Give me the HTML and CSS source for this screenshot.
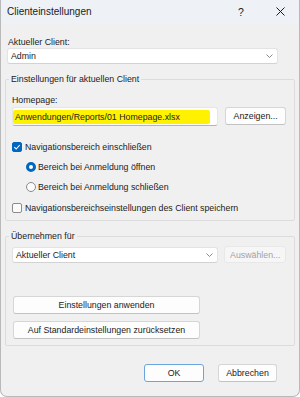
FILE: index.html
```html
<!DOCTYPE html>
<html lang="de">
<head>
  <meta charset="UTF-8" />
  <meta name="viewport" content="width=device-width, initial-scale=1.0"/>
  <title>Clienteinstellungen</title>
  <link rel="stylesheet" href="styles.css">
</head>
<body>

  <div class="dialog">
    <div class="titlebar">
      <span class="title">Clienteinstellungen</span>
      <span class="help">?</span>
      <span class="close">
        <svg width="9" height="9" viewBox="0 0 9 9"><path d="M0.5 0.5 L8.5 8.5 M8.5 0.5 L0.5 8.5" stroke="#1b1b1b" stroke-width="1"/></svg>
      </span>
    </div>

    <div class="content">
      <div class="label client-label">Aktueller Client:</div>
      <div class="combo client-combo">
        <span>Admin</span>
        <svg class="chevron" width="7" height="4" viewBox="0 0 7 4"><path d="M0.5 0.5 L3.5 3.5 L6.5 0.5" fill="none" stroke="#8a8a8a" stroke-width="1"/></svg>
      </div>

      <fieldset class="group group-current">
        <legend>Einstellungen für aktuellen Client</legend>
        <div class="label homepage-label">Homepage:</div>
        <div class="path-row">
          <div class="textbox"><span class="marker">Anwendungen/Reports/01 Homepage.xlsx</span></div>
          <button class="btn btn-show">Anzeigen...</button>
        </div>

        <div class="option first-check">
          <span class="box checked">
            <svg width="8" height="8" viewBox="0 0 8 8"><path d="M1.3 4.2 L3.2 6 L6.8 2" fill="none" stroke="#fff" stroke-width="1.1"/></svg>
          </span>
          Navigationsbereich einschließen
        </div>
        <div class="option radio-row">
          <span class="radio selected"></span>
          Bereich bei Anmeldung öffnen
        </div>
        <div class="option radio-row">
          <span class="radio"></span>
          Bereich bei Anmeldung schließen
        </div>
        <div class="option last-check">
          <span class="box"></span>
          Navigationsbereichseinstellungen des Client speichern
        </div>
      </fieldset>

      <fieldset class="group group-apply">
        <legend>Übernehmen für</legend>
        <div class="apply-row">
          <div class="combo apply-combo">
            <span>Aktueller Client</span>
            <svg class="chevron" width="7" height="4" viewBox="0 0 7 4"><path d="M0.5 0.5 L3.5 3.5 L6.5 0.5" fill="none" stroke="#8a8a8a" stroke-width="1"/></svg>
          </div>
          <button class="btn btn-select" disabled>Auswählen...</button>
        </div>
        <button class="btn wide-btn first-wide">Einstellungen anwenden</button>
        <button class="btn wide-btn">Auf Standardeinstellungen zurücksetzen</button>
      </fieldset>

      <div class="footer">
        <button class="btn btn-ok">OK</button>
        <button class="btn btn-cancel">Abbrechen</button>
      </div>
    </div>
  </div>

</body>
</html>
```

FILE: styles.css
```css
body {
  margin: 0;
  padding: 0;
  background: #ffffff;
}

.dialog {
  width: 300px;
  height: 397px;
  box-sizing: border-box;
  border: 1px solid #b9b9b9;
  border-top: none;
  border-radius: 0 0 7px 7px;
  background: #f0f0f0;
  overflow: hidden;
  font-family: "Liberation Sans", Arial, sans-serif;
  font-size: 8.8px;
  color: #1b1b1b;
}

.titlebar {
  height: 23px;
  display: flex;
  align-items: center;
  background: #eef2f7;
}

.title {
  flex: 1;
  padding-left: 6px;
  font-size: 10px;
}

.help {
  width: 40px;
  text-align: center;
  font-size: 10.5px;
}

.close {
  width: 38px;
  display: flex;
  justify-content: center;
}

.content {
  padding: 13px 4px 0 4px;
}

.label {
  line-height: 12px;
}

.client-label {
  margin-left: 3px;
}

.combo {
  height: 16px;
  box-sizing: border-box;
  background: #ffffff;
  border: 1px solid #e3e3e3;
  border-bottom-color: #d2d2d2;
  border-radius: 3px;
  display: flex;
  align-items: center;
  justify-content: space-between;
  padding: 0 4px 0 3px;
}

.client-combo {
  width: 271px;
  margin-left: 2px;
}

.group {
  margin: 9px 0 0 0;
  padding: 0 8px 6px 6px;
  border: 1px solid #dcdcdc;
  border-radius: 2px;
  min-width: 0;
}

.group legend {
  padding: 0 2px;
  margin-left: -3px;
  line-height: 12px;
}

.homepage-label {
  margin-top: 9px;
}

.path-row {
  display: flex;
  align-items: flex-start;
  gap: 7px;
  margin-top: 1px;
}

.textbox {
  width: 207px;
  height: 19px;
  box-sizing: border-box;
  background: #ffffff;
  border: 1px solid #e6e6e6;
  border-bottom-color: #b5b5b5;
  border-radius: 3px;
  display: flex;
  align-items: center;
}

.marker {
  width: 197px;
  height: 14px;
  line-height: 14px;
  box-sizing: border-box;
  padding-left: 2px;
  background: #fff200;
  border-radius: 2px;
}

.btn {
  height: 18px;
  box-sizing: border-box;
  padding: 0;
  font: inherit;
  color: inherit;
  background: #fdfdfd;
  border: 1px solid #d6d6d6;
  border-bottom-color: #c2c2c2;
  border-radius: 3px;
}

.btn-show {
  width: 61px;
}

.option {
  display: flex;
  align-items: center;
  line-height: 12px;
  margin-top: 8px;
}

.first-check {
  margin-top: 15px;
}

.last-check {
  margin-top: 9px;
}

.box {
  width: 10px;
  height: 10px;
  box-sizing: border-box;
  margin-right: 3px;
  border: 1px solid #8b8b8b;
  border-radius: 2px;
  background: #fbfbfb;
  display: flex;
  align-items: center;
  justify-content: center;
}

.box.checked {
  background: #0067c0;
  border-color: #0067c0;
}

.radio-row {
  padding-left: 14px;
}

.radio {
  width: 10px;
  height: 10px;
  box-sizing: border-box;
  margin-right: 2px;
  border: 1px solid #8b8b8b;
  border-radius: 50%;
  background: #fbfbfb;
}

.radio.selected {
  border: 3px solid #0067c0;
  background: #ffffff;
}

.apply-row {
  display: flex;
  align-items: center;
  gap: 6px;
  margin-top: 4px;
}

.apply-combo {
  width: 208px;
}

.btn-select {
  width: 62px;
  height: 17px;
  color: #a2a2a2;
  background: #f6f6f6;
  border-color: #e8e8e8;
}

.wide-btn {
  display: block;
  width: 187px;
  margin-top: 7px;
  margin-left: 1px;
}

.first-wide {
  margin-top: 33px;
}

.footer {
  display: flex;
  justify-content: flex-end;
  gap: 14px;
  padding-right: 18px;
  margin-top: 18px;
}

.btn-ok {
  width: 60px;
  border-color: #6aa6dd;
}

.btn-cancel {
  width: 59px;
}
```
